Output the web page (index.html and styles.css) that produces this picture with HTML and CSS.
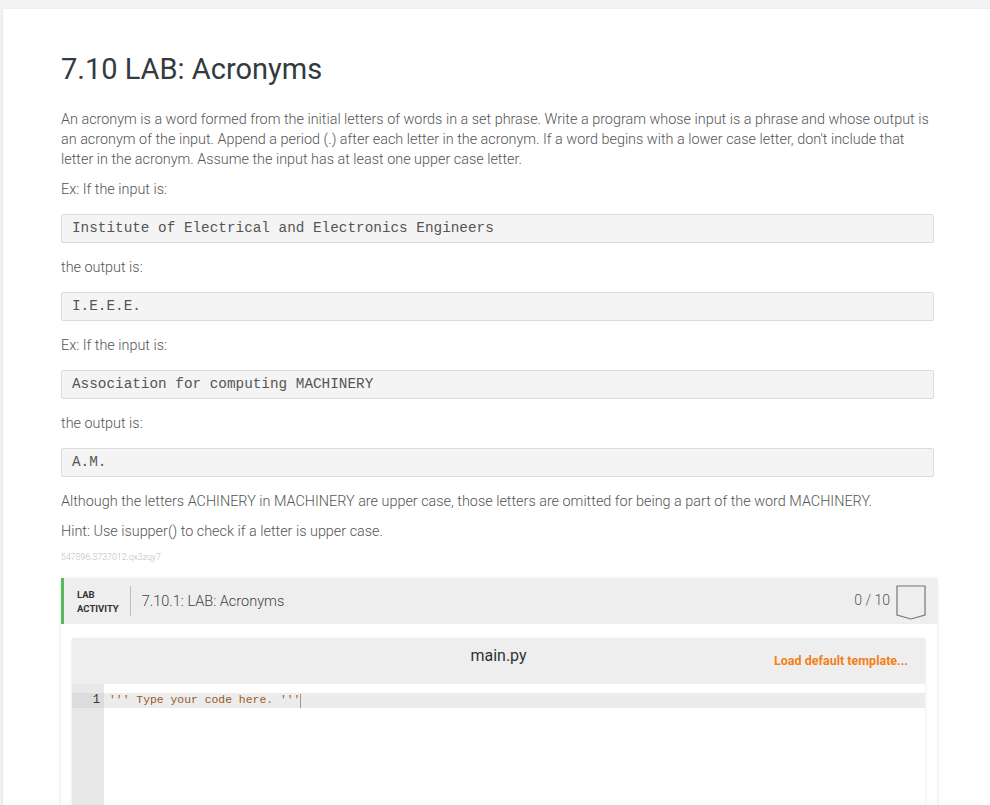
FILE: index.html
```html
<!DOCTYPE html>
<html>
<head>
<meta charset="utf-8">
<link rel="stylesheet" href="styles.css">
</head>
<body>
<div class="card">
  <div class="content">
    <h1 class="title">7.10 LAB: Acronyms</h1>
    <p class="text intro">An acronym is a word formed from the initial letters of words in a set phrase. Write a program whose input is a phrase and whose output is an acronym of the input. Append a period (.) after each letter in the acronym. If a word begins with a lower case letter, don't include that letter in the acronym. Assume the input has at least one upper case letter.</p>
    <p class="text">Ex: If the input is:</p>
    <pre class="code">Institute of Electrical and Electronics Engineers</pre>
    <p class="text">the output is:</p>
    <pre class="code">I.E.E.E.</pre>
    <p class="text">Ex: If the input is:</p>
    <pre class="code">Association for computing MACHINERY</pre>
    <p class="text">the output is:</p>
    <pre class="code">A.M.</pre>
    <p class="text">Although the letters ACHINERY in MACHINERY are upper case, those letters are omitted for being a part of the word MACHINERY.</p>
    <p class="text hint">Hint: Use isupper() to check if a letter is upper case.</p>
    <div class="ident">547896.3737012.qx3zqy7</div>

    <div class="lab">
      <div class="lab-header">
        <div class="lab-label">LAB<br>ACTIVITY</div>
        <div class="lab-sep"></div>
        <div class="lab-title">7.10.1: LAB: Acronyms</div>
        <div class="lab-score">0 / 10</div>
        <svg class="badge" width="31" height="36" viewBox="0 0 31 36">
          <path d="M1 1 H29 V30 L15 34 L1 30 Z" fill="none" stroke="#777" stroke-width="1.2"/>
        </svg>
      </div>
      <div class="lab-body">
        <div class="editor">
          <div class="editor-head">
            <span></span>
            <div class="filename">main.py</div>
            <div class="load">Load default template...</div>
          </div>
          <div class="editor-body">
            <div class="gutter">
              <div class="gutter-line">1</div>
            </div>
            <div class="lines">
              <div class="line"><span class="str">''' Type your code here. '''</span><span class="cursor"></span></div>
            </div>
          </div>
        </div>
      </div>
    </div>
  </div>
</div>
</body>
</html>
```
FILE: styles.css
```css
html, body {
  margin: 0;
  padding: 0;
}
body {
  background: #f3f3f3;
  padding: 9px 0 0 3px;
  font-family: Roboto, "Liberation Sans", sans-serif;
  overflow: hidden;
  height: 805px;
  box-sizing: border-box;
}
.card {
  background: #fff;
  box-shadow: 0 1px 3px rgba(0,0,0,0.12);
  padding: 42px 0 0 58px;
  min-height: 900px;
  width: 1100px;
}
.content {
  width: 876px;
}
.title {
  margin: 0 0 23px 0;
  font-size: 29px;
  line-height: 36px;
  font-weight: 400;
  color: #333a40;
}
.text {
  margin: 0;
  font-size: 14.4px;
  line-height: 20px;
  font-weight: 300;
  color: #555;
}
.intro {
  margin-bottom: 10px;
}
.code {
  margin: 14px 3px 15px 0;
  height: 29px;
  box-sizing: border-box;
  background: #f4f4f4;
  border: 1px solid #dcdcdc;
  border-radius: 2px;
  padding: 0 10px;
  font-family: "Liberation Mono", "Courier New", monospace;
  font-size: 14.35px;
  line-height: 27px;
  color: #555;
}
.hint {
  margin-top: 10px;
}
.ident {
  margin-top: 10px;
  font-size: 8.8px;
  line-height: 10px;
  color: #bdbdbd;
  font-weight: 300;
}
.lab {
  margin-top: 16px;
  box-shadow: 0 1px 3px rgba(0,0,0,0.15);
  background: #fff;
}
.lab-header {
  height: 46px;
  box-sizing: border-box;
  background: #eee;
  border-left: 3px solid #5cb85c;
  display: flex;
  align-items: center;
  padding: 0 10px 0 13px;
}
.lab-label {
  font-size: 9.5px;
  line-height: 14px;
  font-weight: 700;
  color: #333;
  margin-top: 1px;
}
.lab-sep {
  width: 1px;
  height: 30px;
  background: #bbb;
  margin: 0 11px 0 11px;
}
.lab-title {
  flex: 1;
  font-size: 14.5px;
  font-weight: 300;
  color: #444;
}
.lab-score {
  font-size: 14px;
  font-weight: 300;
  color: #555;
  margin-right: 6px;
  margin-top: -2px;
}
.badge {
  display: block;
  margin-top: 4px;
}
.lab-body {
  padding: 14px 12px 0 11px;
}
.editor {
  box-shadow: 0 1px 3px rgba(0,0,0,0.12);
}
.editor-head {
  height: 46px;
  background: #eee;
  display: grid;
  grid-template-columns: 1fr auto 1fr;
  align-items: start;
}
.filename {
  margin-top: 8px;
  font-size: 16px;
  line-height: 20px;
  color: #333;
}
.load {
  justify-self: end;
  margin: 15px 17px 0 0;
  font-size: 12.5px;
  line-height: 16px;
  font-weight: 700;
  color: #f57f17;
}
.editor-body {
  display: flex;
  height: 200px;
}
.gutter {
  width: 32px;
  background: #e8e8e8;
  padding-top: 9px;
}
.gutter-line {
  height: 15px;
  background: #dcdcdc;
  text-align: right;
  padding-right: 4px;
  font-family: "Liberation Mono", monospace;
  font-size: 12px;
  line-height: 15px;
  color: #333;
}
.lines {
  flex: 1;
  padding-top: 9px;
}
.line {
  height: 15px;
  background: #ececec;
  padding-left: 5px;
  display: flex;
  align-items: center;
  font-family: "Liberation Mono", monospace;
  font-size: 11.4px;
  line-height: 15px;
}
.str {
  color: #9a5a1c;
  white-space: pre;
}
.cursor {
  width: 1px;
  height: 14px;
  background: #999;
}
```
